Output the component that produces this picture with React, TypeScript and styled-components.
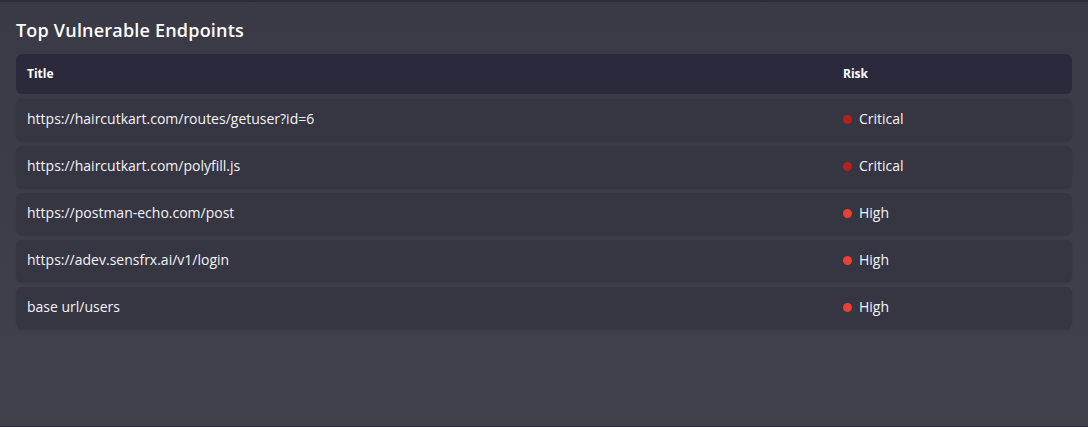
import styled, { createGlobalStyle } from 'styled-components';

type Risk = 'Critical' | 'High';

type Endpoint = {
  title: string;
  risk: Risk;
};

const endpoints: Endpoint[] = [
  { title: 'https://haircutkart.com/routes/getuser?id=6', risk: 'Critical' },
  { title: 'https://haircutkart.com/polyfill.js', risk: 'Critical' },
  { title: 'https://postman-echo.com/post', risk: 'High' },
  { title: 'https://adev.sensfrx.ai/v1/login', risk: 'High' },
  { title: 'base url/users', risk: 'High' },
];

const riskColors: Record<Risk, string> = {
  Critical: '#b81f1f',
  High: '#ee3f35',
};

function App() {
  return (
    <>
      <GlobalStyle />
      <Card>
        <Heading>Top Vulnerable Endpoints</Heading>
        <Table>
          <HeaderRow>
            <HeaderCell>Title</HeaderCell>
            <HeaderCell>Risk</HeaderCell>
          </HeaderRow>
          {endpoints.map((item) => (
            <Row key={item.title}>
              <TitleCell>{item.title}</TitleCell>
              <RiskCell>
                <Dot $color={riskColors[item.risk]} />
                {item.risk}
              </RiskCell>
            </Row>
          ))}
        </Table>
      </Card>
    </>
  );
}

const GlobalStyle = createGlobalStyle`
  html, body {
    margin: 0;
    padding: 0;
    background: #3f3f4a;
  }
  body {
    font-family: 'Open Sans', 'Liberation Sans', sans-serif;
    color: #ffffff;
  }
`;

const Card = styled.div`
  box-sizing: border-box;
  width: 1088px;
  height: 427px;
  padding: 16px 16px 0 16px;
  border-top: 2px solid #2c2c39;
  border-bottom: 1px solid #2a2a3a;
  background: linear-gradient(180deg, #3a3a46 0%, #41414c 100%);
`;

const Heading = styled.h2`
  margin: 0 0 11px 0;
  font-size: 18px;
  font-weight: 600;
  line-height: 25px;
  letter-spacing: 0.2px;
  color: #ffffff;
`;

const Table = styled.div`
  display: flex;
  flex-direction: column;
  gap: 5px;
`;

const gridCols = `
  box-sizing: border-box;
  display: grid;
  grid-template-columns: 816px 1fr;
  align-items: center;
  border-radius: 6px;
  padding: 0 11px;
`;

const HeaderRow = styled.div`
  ${gridCols}
  height: 40px;
  padding-bottom: 1px;
  background: #2b2a3d;
`;

const HeaderCell = styled.div`
  font-size: 12px;
  font-weight: 700;
  color: #ffffff;
`;

const Row = styled.div`
  ${gridCols}
  height: 42px;
  padding-bottom: 4px;
  background: #363542;
  box-shadow: 0 1px 2px rgba(0, 0, 0, 0.12);
`;

const TitleCell = styled.div`
  font-size: 14px;
  color: #f4f4f6;
`;

const RiskCell = styled.div`
  display: flex;
  align-items: center;
  gap: 7px;
  font-size: 14px;
  color: #f4f4f6;
`;

const Dot = styled.span<{ $color: string }>`
  width: 9px;
  height: 9px;
  margin-top: 2px;
  border-radius: 50%;
  background: ${(p) => p.$color};
`;

export default App;
